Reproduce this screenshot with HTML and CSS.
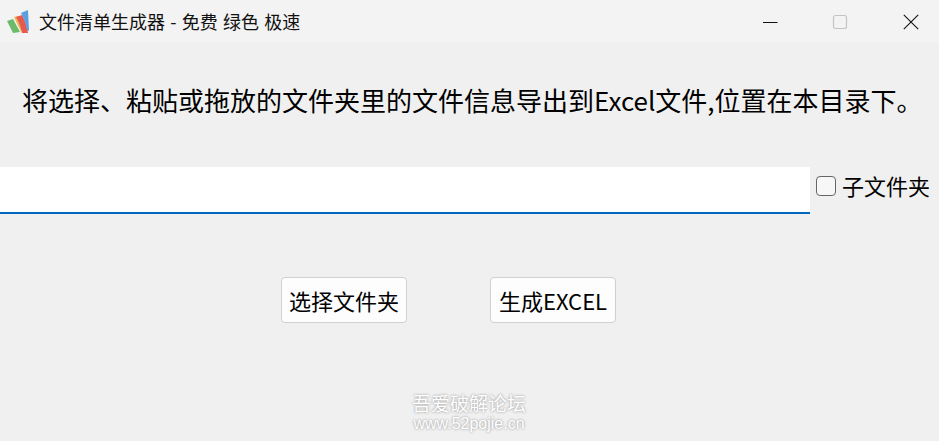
FILE: index.html
```html
<!DOCTYPE html>
<html lang="zh-CN">
<head>
<meta charset="utf-8">
<title>文件清单生成器</title>
<link rel="stylesheet" href="styles.css">
</head>
<body>
<div class="window">
  <header class="titlebar">
    <svg class="logo" width="24" height="24" viewBox="0 0 24 24">
      <path d="M0 11 L6 9 L13 22 L6 23 Z" fill="#6dbb6a"/>
      <path d="M7 7 L11 6 L16 18 L14 22 Z" fill="#edb75c"/>
      <path d="M9 7 L15 5 C18 10 20 17 21 23 L15 23 C14 17 12 12 9 7 Z" fill="#e8584c"/>
      <path d="M14 3 L21 0 L22 21 L20 20 C19 14 17 9 14 3 Z" fill="#5b9fe0"/>
    </svg>
    <span class="title">文件清单生成器 - 免费 绿色 极速</span>
    <div class="controls">
      <span class="ctl"><svg width="16" height="16" viewBox="0 0 16 16"><path d="M1 8.5H15.5" stroke="#111" stroke-width="1"/></svg></span>
      <span class="ctl"><svg width="16" height="16" viewBox="0 0 16 16"><rect x="1.5" y="1.5" width="13" height="13" rx="2" fill="none" stroke="#c4c4c4" stroke-width="1.2"/></svg></span>
      <span class="ctl ctl-close"><svg width="16" height="16" viewBox="0 0 16 16"><path d="M.8 .8L15.2 15.2M15.2 .8L.8 15.2" stroke="#111" stroke-width="1.1"/></svg></span>
    </div>
  </header>
  <main class="content">
    <p class="intro">将选择、粘贴或拖放的文件夹里的文件信息导出到Excel文件,位置在本目录下。</p>
    <div class="path-row">
      <div class="path-input"></div>
      <label class="sub"><span class="box"></span>子文件夹</label>
    </div>
    <div class="buttons">
      <button class="btn">选择文件夹</button>
      <button class="btn">生成EXCEL</button>
    </div>
  </main>
  <div class="watermark">
    <div class="wm-cn">吾爱破解论坛</div>
    <div class="wm-en">www.52pojie.cn</div>
  </div>
</div>
</body>
</html>
```
FILE: styles.css
```css
html, body {
  margin: 0;
  padding: 0;
}
body {
  width: 939px;
  height: 441px;
  overflow: hidden;
  background: #f0f0f0;
  font-family: "Noto Sans CJK SC", "Noto Sans", sans-serif;
  color: #000;
}
.window {
  position: relative;
  height: 441px;
}
.titlebar {
  display: flex;
  align-items: center;
  height: 43px;
  background: #f3f3f3;
  padding-left: 7px;
  box-sizing: border-box;
}
.logo {
  flex: none;
  margin-right: 8px;
}
.title {
  font-size: 18px;
  line-height: 24px;
  word-spacing: 1.25px;
  color: #111;
  white-space: nowrap;
  margin-top: -2px;
}
.controls {
  display: flex;
  margin-left: auto;
}
.ctl {
  width: 70px;
  height: 43px;
  display: flex;
  align-items: center;
  justify-content: center;
}
.ctl-close {
  width: 56px;
  margin-left: 8px;
}
.content {
  display: flex;
  flex-direction: column;
}
.intro {
  margin: 37px 0 0 22px;
  font-size: 26px;
  line-height: 40px;
  white-space: nowrap;
}
.path-row {
  display: flex;
  align-items: center;
  margin-top: 47px;
}
.path-input {
  width: 810px;
  height: 47px;
  background: #fff;
  border-bottom: 2px solid #0067c0;
  box-sizing: border-box;
}
.sub {
  display: flex;
  align-items: center;
  margin: 0 0 11px 6px;
  font-size: 22px;
  line-height: 30px;
  white-space: nowrap;
}
.box {
  width: 20px;
  height: 20px;
  border: 1px solid #666;
  border-radius: 4px;
  background: #f7f7f7;
  box-sizing: border-box;
  margin: 2px 6px 0 0;
}
.buttons {
  display: flex;
  gap: 83px;
  margin: 63px 0 0 281px;
}
.btn {
  width: 126px;
  height: 46px;
  padding: 0;
  background: #fdfdfd;
  border: 1px solid #d0d0d0;
  border-radius: 4px;
  font-family: inherit;
  font-size: 22px;
  line-height: 28px;
  color: #000;
}
.watermark {
  position: absolute;
  left: 403px;
  top: 391px;
  width: 132px;
  text-align: center;
  color: #fff;
  text-shadow: 0 0 2px #a8a8a8, 0 0 3px #b8b8b8;
  white-space: nowrap;
}
.wm-cn {
  font-size: 19px;
  line-height: 24px;
}
.wm-en {
  font-family: "Liberation Sans", sans-serif;
  font-size: 16px;
  line-height: 18px;
}
```
